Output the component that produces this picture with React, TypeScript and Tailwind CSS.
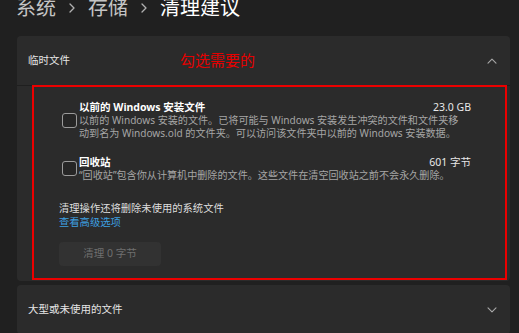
import React from "react";

const Chev = ({ up }: { up?: boolean }) => (
  <svg width="10" height="6" viewBox="0 0 10 6" fill="none">
    <path
      d={up ? "M1 5.2L5 1.2L9 5.2" : "M1 0.8L5 4.8L9 0.8"}
      stroke="#a8a8a8"
      strokeWidth="1.1"
      strokeLinecap="round"
      strokeLinejoin="round"
    />
  </svg>
);

const Crumb = () => (
  <div className="w-[32px] flex justify-center items-center">
    <svg width="6" height="10" viewBox="0 0 6 10" fill="none">
      <path d="M1 1L5 5L1 9" stroke="#b0b0b0" strokeWidth="1.3" strokeLinecap="round" strokeLinejoin="round" />
    </svg>
  </div>
);

const Box = () => (
  <div className="w-[15px] h-[15px] shrink-0 rounded-[3px] border border-[#9b9b9b] bg-[#262626]" />
);

export default function App() {
  return (
    <div
      className="w-[519px] h-[333px] bg-[#202020] overflow-hidden text-white"
      style={{ fontFamily: '"Noto Sans", "Noto Sans CJK SC", sans-serif' }}
    >
      <div className="flex items-center pl-[16px] -mt-[6px] h-[28px] text-[20px] leading-[28px]">
        <span className="text-[#c4c4c4]">系统</span>
        <Crumb />
        <span className="text-[#c4c4c4]">存储</span>
        <Crumb />
        <span className="text-white">清理建议</span>
      </div>

      <div className="mt-[14px] ml-[17px] w-[493px] rounded-[4px] bg-[#2b2b2b] relative">
        <div className="h-[49px] flex items-center justify-between pl-[11px] pr-[13px] relative">
          <span className="text-[10.5px] text-[#e6e6e6]">临时文件</span>
          <Chev up />
          <span className="absolute left-[163px] top-[14px] text-[15px] leading-[20px] text-[#e60000]">
            勾选需要的
          </span>
        </div>
        <div className="h-px bg-[#1f1f1f]" />
        <div className="relative h-[195px] pl-[42px] pr-[39px] pt-[14px]">
          <div className="flex items-center gap-[2px] pl-[3px]">
            <Box />
            <div className="flex-1">
              <div className="flex justify-between text-[10.5px] leading-[14px]">
                <span className="font-bold text-white">以前的 Windows 安装文件</span>
                <span className="text-[#e8e8e8]">23.0 GB</span>
              </div>
              <div className="text-[10.1px] leading-[13px] text-[#a6a6a6] whitespace-nowrap">
                以前的 Windows 安装的文件。已将可能与 Windows 安装发生冲突的文件和文件夹移
                <br />
                动到名为 Windows.old 的文件夹。可以访问该文件夹中以前的 Windows 安装数据。
              </div>
            </div>
          </div>

          <div className="flex items-center gap-[2px] pl-[3px] mt-[15px]">
            <Box />
            <div className="flex-1">
              <div className="flex justify-between text-[10.5px] leading-[14px]">
                <span className="font-bold text-white">回收站</span>
                <span className="text-[#e8e8e8]">601 字节</span>
              </div>
              <div className="text-[10.1px] leading-[13px] text-[#a6a6a6] whitespace-nowrap">
                “回收站”包含你从计算机中删除的文件。这些文件在清空回收站之前不会永久删除。
              </div>
            </div>
          </div>

          <div className="mt-[19px] text-[10.3px] leading-[14px] text-[#dedede]">清理操作还将删除未使用的系统文件</div>
          <div className="text-[10.3px] leading-[14px] text-[#3d9fe0]">查看高级选项</div>

          <div className="mt-[13px] w-[102px] h-[24px] rounded-[4px] bg-[#323232] flex items-center justify-center text-[10.5px] text-[#6f6f6f]">
            清理 0 字节
          </div>

          <div className="absolute left-[15px] top-[-1px] right-[3px] bottom-[1px] border-2 border-[#ec0000] pointer-events-none" />
        </div>
      </div>

      <div className="mt-[4px] ml-[17px] w-[493px] rounded-[4px] bg-[#2b2b2b]">
        <div className="h-[49px] flex items-center justify-between pl-[11px] pr-[13px]">
          <span className="text-[10.5px] text-[#e6e6e6]">大型或未使用的文件</span>
          <Chev />
        </div>
      </div>
    </div>
  );
}
